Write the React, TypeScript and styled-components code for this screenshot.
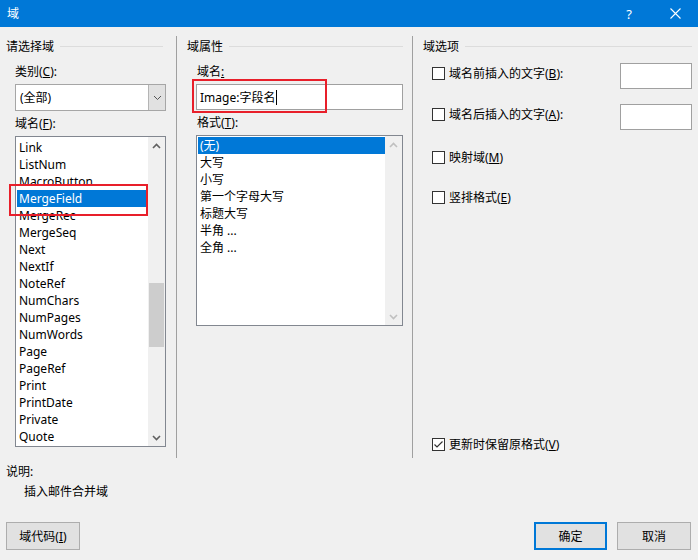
import React from "react";
import styled, { createGlobalStyle } from "styled-components";

const GlobalStyle = createGlobalStyle`
  html, body { margin: 0; padding: 0; background: #f0f0f0; }
  body { font-family: "Noto Sans", "Noto Sans CJK SC", sans-serif; font-size: 12px; color: #000; }
  * { box-sizing: border-box; }
`;

const Window = styled.div`
  width: 698px;
  height: 560px;
  display: flex;
  flex-direction: column;
  background: #f0f0f0;
  overflow: hidden;
`;

const TitleBar = styled.div`
  height: 27px;
  background: #0078d7;
  color: #fff;
  display: flex;
  align-items: center;
  padding-left: 7px;
`;

const Title = styled.div`
  flex: 1;
  font-size: 12px;
  line-height: 16px;
`;

const CtlButton = styled.div`
  width: 46px;
  height: 27px;
  display: flex;
  align-items: center;
  justify-content: center;
  font-size: 13px;
  color: #fff;
`;

const Columns = styled.div`
  margin-top: 9px;
  height: 422px;
  display: flex;
`;

const Column = styled.div<{ $width?: number; $divider?: boolean }>`
  ${(p) => (p.$width ? `width: ${p.$width}px;` : "flex: 1;")}
  ${(p) => (p.$divider ? "border-left: 1px solid #a0a0a0;" : "")}
  padding-top: 2px;
  display: flex;
  flex-direction: column;
`;

const RightColumn = styled(Column)`
  padding-bottom: 6px;
`;

const SectionHeader = styled.div<{ $pl: number; $pr: number }>`
  display: flex;
  align-items: center;
  height: 16px;
  padding: 0 ${(p) => p.$pr}px 0 ${(p) => p.$pl}px;
`;

const SectionLine = styled.div`
  flex: 1;
  height: 1px;
  background: #dcdcdc;
  margin-left: 6px;
`;

const FieldLabel = styled.div<{ $ml: number; $mt: number }>`
  margin: ${(p) => p.$mt}px 0 0 ${(p) => p.$ml}px;
  height: 16px;
  line-height: 16px;
  white-space: nowrap;
`;

const Mn = styled.span`
  text-decoration: underline;
  text-underline-offset: 1px;
`;

const Combo = styled.div`
  margin: 4px 0 0 15px;
  width: 151px;
  height: 27px;
  border: 1px solid #a6a6a6;
  background: #fff;
  display: flex;
`;

const ComboText = styled.div`
  flex: 1;
  padding-left: 4px;
  line-height: 25px;
`;

const ComboButton = styled.div`
  width: 17px;
  margin: 0;
  background: #e1e1e1;
  border-left: 1px solid #b4b4b4;
  display: flex;
  align-items: center;
  justify-content: center;
`;

const ListBox = styled.div<{ $ml: number; $mt: number; $w: number; $h: number }>`
  position: relative;
  margin: ${(p) => p.$mt}px 0 0 ${(p) => p.$ml}px;
  width: ${(p) => p.$w}px;
  height: ${(p) => p.$h}px;
  border: 1px solid #828790;
  background: #fff;
  display: flex;
`;

const ListItems = styled.div<{ $pt: number }>`
  flex: 1;
  padding: ${(p) => p.$pt}px 0 0 1px;
  overflow: hidden;
`;

const ListItem = styled.div<{ $selected?: boolean }>`
  height: 17px;
  line-height: 17px;
  padding-left: 2px;
  white-space: nowrap;
  background: ${(p) => (p.$selected ? "#0078d7" : "transparent")};
  color: ${(p) => (p.$selected ? "#fff" : "#000")};
`;

const ScrollBar = styled.div`
  width: 17px;
  background: #f0f0f0;
  display: flex;
  flex-direction: column;
`;

const ScrollArrow = styled.div`
  height: 17px;
  display: flex;
  align-items: center;
  justify-content: center;
`;

const ScrollTrack = styled.div`
  flex: 1;
  display: flex;
  flex-direction: column;
`;

const Thumb = styled.div<{ $offset: number; $size: number }>`
  margin: ${(p) => p.$offset}px 1px 0 1px;
  height: ${(p) => p.$size}px;
  background: #cdcdcd;
`;

const Highlight = styled.div<{ $l: number; $t: number; $w: number; $h: number }>`
  position: absolute;
  left: ${(p) => p.$l}px;
  top: ${(p) => p.$t}px;
  width: ${(p) => p.$w}px;
  height: ${(p) => p.$h}px;
  border: 2px solid #e81f2a;
  pointer-events: none;
`;

const InputWrap = styled.div`
  position: relative;
  margin: 4px 0 0 19px;
  width: 207px;
  height: 26px;
`;

const TextInput = styled.div<{ $w?: number }>`
  width: ${(p) => (p.$w ? `${p.$w}px` : "100%")};
  height: 26px;
  border: 1px solid #a0a0a0;
  background: #fff;
  padding-left: 3px;
  display: flex;
  align-items: center;
  white-space: nowrap;
`;

const Caret = styled.span`
  display: inline-block;
  width: 1px;
  height: 15px;
  background: #000;
  margin-left: 1px;
`;

const OptionRow = styled.div<{ $mt: number }>`
  margin-top: ${(p) => p.$mt}px;
  display: flex;
  align-items: flex-start;
  padding: 0 6px 0 19px;
`;

const PushedRow = styled(OptionRow)`
  margin-top: auto;
`;

const CheckLabel = styled.div<{ $mt?: number }>`
  margin-top: ${(p) => p.$mt ?? 0}px;
  height: 16px;
  display: flex;
  align-items: center;
  white-space: nowrap;
  flex: 1;
`;

const CheckBox = styled.div`
  width: 13px;
  height: 13px;
  border: 1px solid #333;
  background: #fff;
  margin-right: 4px;
  display: flex;
  align-items: center;
  justify-content: center;
`;

const Description = styled.div`
  display: flex;
  flex-direction: column;
`;

const BottomBar = styled.div`
  margin-top: 22px;
  display: flex;
  padding: 0 7px 0 6px;
  gap: 10px;
`;

const Spacer = styled.div`
  flex: 1;
`;

const Button = styled.div<{ $primary?: boolean; $w: number }>`
  width: ${(p) => p.$w}px;
  height: 28px;
  background: #e1e1e1;
  border: ${(p) => (p.$primary ? "2px solid #0078d7" : "1px solid #adadad")};
  display: flex;
  align-items: center;
  justify-content: center;
  white-space: nowrap;
`;

const ChevronUp = ({ color }: { color: string }) => (
  <svg width="9" height="6" viewBox="0 0 9 6">
    <path d="M1 5 L4.5 1.5 L8 5" fill="none" stroke={color} strokeWidth="1.6" />
  </svg>
);

const ChevronDown = ({ color }: { color: string }) => (
  <svg width="9" height="6" viewBox="0 0 9 6">
    <path d="M1 1 L4.5 4.5 L8 1" fill="none" stroke={color} strokeWidth="1.6" />
  </svg>
);

const fields = [
  "Link", "ListNum", "MacroButton", "MergeField", "MergeRec", "MergeSeq", "Next", "NextIf",
  "NoteRef", "NumChars", "NumPages", "NumWords", "Page", "PageRef", "Print", "PrintDate",
  "Private", "Quote",
];

const formats = ["(无)", "大写", "小写", "第一个字母大写", "标题大写", "半角 ...", "全角 ..."];

const Check = ({ checked }: { checked?: boolean }) => (
  <CheckBox>
    {checked && (
      <svg width="11" height="11" viewBox="0 0 11 11">
        <path d="M1.5 5.5 L4 8 L9.5 2.5" fill="none" stroke="#333" strokeWidth="1.2" />
      </svg>
    )}
  </CheckBox>
);

export default function App() {
  return (
    <Window>
      <GlobalStyle />
      <TitleBar>
        <Title>域</Title>
        <CtlButton>?</CtlButton>
        <CtlButton>
          <svg width="11" height="11" viewBox="0 0 11 11">
            <path d="M0.5 0.5 L10.5 10.5 M10.5 0.5 L0.5 10.5" stroke="#fff" strokeWidth="1.1" />
          </svg>
        </CtlButton>
      </TitleBar>

      <Columns>
        <Column $width={176}>
          <SectionHeader $pl={6} $pr={13}>
            请选择域
            <SectionLine />
          </SectionHeader>
          <FieldLabel $ml={15} $mt={10}>
            类别(<Mn>C</Mn>):
          </FieldLabel>
          <Combo>
            <ComboText>(全部)</ComboText>
            <ComboButton>
              <svg width="9" height="6" viewBox="0 0 9 6">
                <path d="M1 1 L4.5 4.5 L8 1" fill="none" stroke="#555" strokeWidth="1" />
              </svg>
            </ComboButton>
          </Combo>
          <FieldLabel $ml={15} $mt={5}>
            域名(<Mn>F</Mn>):
          </FieldLabel>
          <ListBox $ml={15} $mt={4} $w={151} $h={311}>
            <ListItems $pt={2}>
              {fields.map((f) => (
                <ListItem key={f} $selected={f === "MergeField"}>
                  {f}
                </ListItem>
              ))}
            </ListItems>
            <ScrollBar>
              <ScrollArrow>
                <ChevronUp color="#606060" />
              </ScrollArrow>
              <ScrollTrack>
                <Thumb $offset={129} $size={64} />
              </ScrollTrack>
              <ScrollArrow>
                <ChevronDown color="#606060" />
              </ScrollArrow>
            </ScrollBar>
            <Highlight $l={-7} $t={47} $w={139} $h={32} />
          </ListBox>
        </Column>

        <Column $width={236} $divider>
          <SectionHeader $pl={10} $pr={9}>
            域属性
            <SectionLine />
          </SectionHeader>
          <FieldLabel $ml={20} $mt={10}>
            域名<Mn>:</Mn>
          </FieldLabel>
          <InputWrap>
            <TextInput>
              Image:字段名
              <Caret />
            </TextInput>
            <Highlight $l={-4} $t={-5} $w={135} $h={34} />
          </InputWrap>
          <FieldLabel $ml={20} $mt={5}>
            格式(<Mn>T</Mn>):
          </FieldLabel>
          <ListBox $ml={19} $mt={4} $w={207} $h={191}>
            <ListItems $pt={1}>
              {formats.map((f, i) => (
                <ListItem key={f} $selected={i === 0}>
                  {f}
                </ListItem>
              ))}
            </ListItems>
            <ScrollBar>
              <ScrollArrow>
                <ChevronUp color="#c0c0c0" />
              </ScrollArrow>
              <ScrollTrack />
              <ScrollArrow>
                <ChevronDown color="#c0c0c0" />
              </ScrollArrow>
            </ScrollBar>
          </ListBox>
        </Column>

        <RightColumn $divider>
          <SectionHeader $pl={10} $pr={6}>
            域选项
            <SectionLine />
          </SectionHeader>
          <OptionRow $mt={9}>
            <CheckLabel $mt={2}>
              <Check />
              域名前插入的文字(<Mn>B</Mn>):
            </CheckLabel>
            <TextInput $w={72} />
          </OptionRow>
          <OptionRow $mt={15}>
            <CheckLabel $mt={2}>
              <Check />
              域名后插入的文字(<Mn>A</Mn>):
            </CheckLabel>
            <TextInput $w={72} />
          </OptionRow>
          <OptionRow $mt={19}>
            <CheckLabel>
              <Check />
              映射域(<Mn>M</Mn>)
            </CheckLabel>
          </OptionRow>
          <OptionRow $mt={24}>
            <CheckLabel>
              <Check />
              竖排格式(<Mn>E</Mn>)
            </CheckLabel>
          </OptionRow>
          <PushedRow $mt={0}>
            <CheckLabel>
              <Check checked />
              更新时保留原格式(<Mn>V</Mn>)
            </CheckLabel>
          </PushedRow>
        </RightColumn>
      </Columns>

      <Description>
        <FieldLabel $ml={6} $mt={6}>
          说明:
        </FieldLabel>
        <FieldLabel $ml={24} $mt={4}>
          插入邮件合并域
        </FieldLabel>
      </Description>

      <BottomBar>
        <Button $w={74}>
          域代码(<Mn>I</Mn>)
        </Button>
        <Spacer />
        <Button $w={73} $primary>
          确定
        </Button>
        <Button $w={74}>取消</Button>
      </BottomBar>
    </Window>
  );
}
